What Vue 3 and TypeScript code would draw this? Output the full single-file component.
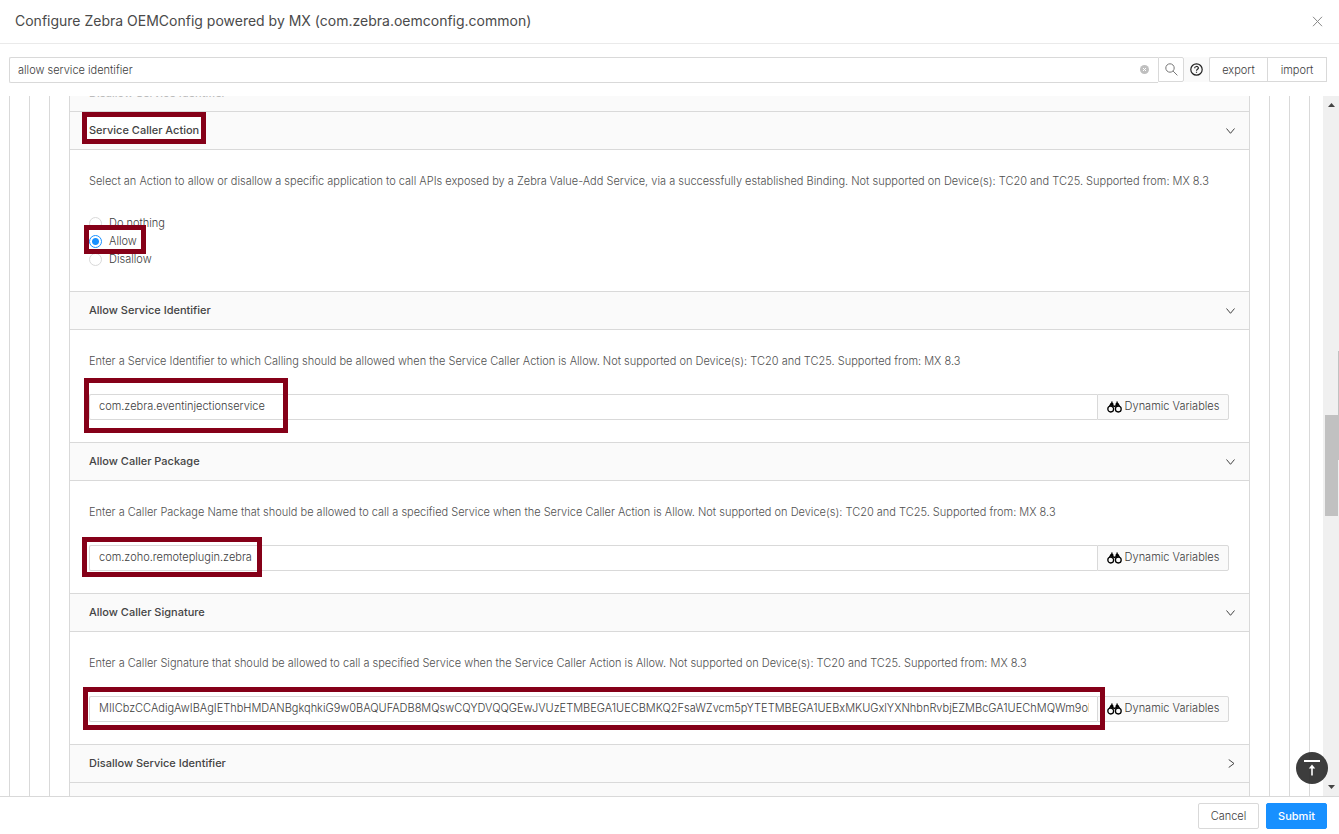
<script setup lang="ts">
import { ref } from 'vue'

interface Section {
  id: string
  title: string
  description: string
  value: string
}

const query = ref('allow service identifier')
const action = ref('Allow')
const actions = ['Do nothing', 'Allow', 'Disallow']

const sections = ref<Section[]>([
  {
    id: 'identifier',
    title: 'Allow Service Identifier',
    description:
      'Enter a Service Identifier to which Calling should be allowed when the Service Caller Action is Allow. Not supported on Device(s): TC20 and TC25. Supported from: MX 8.3',
    value: 'com.zebra.eventinjectionservice',
  },
  {
    id: 'package',
    title: 'Allow Caller Package',
    description:
      'Enter a Caller Package Name that should be allowed to call a specified Service when the Service Caller Action is Allow. Not supported on Device(s): TC20 and TC25. Supported from: MX 8.3',
    value: 'com.zoho.remoteplugin.zebra',
  },
  {
    id: 'signature',
    title: 'Allow Caller Signature',
    description:
      'Enter a Caller Signature that should be allowed to call a specified Service when the Service Caller Action is Allow. Not supported on Device(s): TC20 and TC25. Supported from: MX 8.3',
    value:
      'MIICbzCCAdigAwIBAgIEThbHMDANBgkqhkiG9w0BAQUFADB8MQswCQYDVQQGEwJVUzETMBEGA1UECBMKQ2FsaWZvcm5pYTETMBEGA1UEBxMKUGxlYXNhbnRvbjEZMBcGA1UEChMQWm9obyBDb3Jwb3JhdGlvbjE',
  },
])
</script>

<template>
  <div class="dialog">
    <header class="title-bar">
      <h1>Configure Zebra OEMConfig powered by MX (com.zebra.oemconfig.common)</h1>
      <button class="icon-btn close" aria-label="Close">
        <svg width="11" height="11" viewBox="0 0 11 11"><path d="M1 .8l9 9.4M10 .8l-9 9.4" /></svg>
      </button>
    </header>

    <div class="toolbar">
      <div class="search">
        <input v-model="query" type="text" aria-label="Search" />
        <button class="icon-btn clear" aria-label="Clear search">
          <svg width="9" height="9" viewBox="0 0 9 9">
            <circle cx="4.5" cy="4.5" r="4.5" fill="#bfbfbf" />
            <path d="M3 3l3 3M6 3L3 6" stroke="#fff" />
          </svg>
        </button>
      </div>
      <button class="tool search-btn" aria-label="Search">
        <svg width="13" height="13" viewBox="0 0 13 13">
          <circle cx="5" cy="5" r="4.2" />
          <path d="M8.1 8.1L12.4 12.4" />
        </svg>
      </button>
      <button class="tool help" aria-label="Help">
        <svg width="13" height="13" viewBox="0 0 13 13">
          <circle cx="6.5" cy="6.5" r="5.7" />
          <path d="M4.6 5.3c0-2.4 3.8-2.4 3.8-.2 0 1.3-1.9 1.2-1.9 2.7M6.5 8.7v1.1" />
        </svg>
      </button>
      <button class="tool export">export</button>
      <button class="tool import">import</button>
    </div>

    <div class="viewport">
      <div class="nest outer">
        <div class="nest">
          <div class="nest">
            <div class="panel">
              <button class="head faded">
                <span>Disallow Service Identifier</span>
                <svg class="chevron" width="9" height="6" viewBox="0 0 9 6"><path d="M.5 .5l4 4.8 4-4.8" /></svg>
              </button>

              <section>
                <button class="head">
                  <span class="mark mark-title"></span>
                  <span class="over">Service Caller Action</span>
                  <svg class="chevron" width="9" height="6" viewBox="0 0 9 6"><path d="M.5 .5l4 4.8 4-4.8" /></svg>
                </button>
                <div class="body">
                  <p>
                    Select an Action to allow or disallow a specific application to call APIs exposed by a Zebra
                    Value-Add Service, via a successfully established Binding. Not supported on Device(s): TC20 and
                    TC25. Supported from: MX 8.3
                  </p>
                  <div class="radios" role="radiogroup" aria-label="Service Caller Action">
                    <label v-for="a in actions" :key="a">
                      <input v-model="action" type="radio" name="action" :value="a" />
                      {{ a }}
                      <span v-if="a === 'Allow'" class="mark mark-allow"></span>
                    </label>
                  </div>
                </div>
              </section>

              <section v-for="s in sections" :key="s.id">
                <button class="head">
                  <span>{{ s.title }}</span>
                  <svg class="chevron" width="9" height="6" viewBox="0 0 9 6"><path d="M.5 .5l4 4.8 4-4.8" /></svg>
                </button>
                <div class="body">
                  <p>{{ s.description }}</p>
                  <div class="field">
                    <div class="entry">
                      <input v-model="s.value" type="text" :aria-label="s.title" />
                      <span class="mark" :class="'mark-' + s.id"></span>
                    </div>
                    <button class="dynamic">
                      <svg width="15" height="12" viewBox="0 0 15 12">
                        <path d="M1.8 5.2L3.6 2h2.6l.5 2.6h1.6L8.8 2h2.6l1.8 3.2-2.4-.4-3.3 1.4-3.3-1.4z" fill="#000" stroke="none" />
                        <path d="M4.2 .6h1.4V3H4.2zM9.4 .6h1.4V3H9.4z" fill="#000" stroke="none" />
                        <circle cx="3.7" cy="8.1" r="2.9" />
                        <circle cx="11.3" cy="8.1" r="2.9" />
                      </svg>
                      <span>Dynamic Variables</span>
                    </button>
                  </div>
                </div>
              </section>

              <button class="head">
                <span>Disallow Service Identifier</span>
                <svg class="chevron" width="7" height="9" viewBox="0 0 7 9"><path d="M.7 .5l5.3 4-5.3 4" /></svg>
              </button>
              <button class="head" aria-label="Disallow Caller Package"></button>
            </div>
          </div>
        </div>
      </div>

      <div class="scrollbar" aria-hidden="true">
        <svg width="7" height="4" viewBox="0 0 7 4"><path d="M0 4l3.5-4L7 4z" /></svg>
        <div class="track">
          <div class="thumb"></div>
          <div class="page-thumb"></div>
        </div>
        <svg width="7" height="4" viewBox="0 0 7 4"><path d="M0 0l3.5 4L7 0z" /></svg>
      </div>

      <button class="to-top" aria-label="Back to top">
        <svg width="16" height="16" viewBox="0 0 16 16">
          <path d="M0 1h16" stroke-width="2" />
          <path d="M8 15.5V6" stroke-width="1.6" />
          <path d="M4.8 8.6L8 4.6l3.2 4z" fill="#fff" stroke="none" />
        </svg>
      </button>
    </div>

    <footer>
      <button class="cancel">Cancel</button>
      <button class="submit">Submit</button>
    </footer>
  </div>
</template>

<style>
body {
  margin: 0;
  overflow: hidden;
}
</style>

<style scoped>
.dialog,
.dialog * {
  box-sizing: border-box;
}
.dialog {
  display: flex;
  flex-direction: column;
  height: 100vh;
  background: #fff;
  color: #3c3c3c;
  font: 300 11px/18px Inter, 'Liberation Sans', sans-serif;
}
button,
input {
  margin: 0;
  font: inherit;
  color: inherit;
}
button {
  display: flex;
  align-items: center;
  justify-content: center;
  padding: 0;
  border: 1px solid #d9d9d9;
  background: #fff;
}
svg {
  display: block;
  flex: none;
  fill: none;
  stroke: #444;
}
.icon-btn {
  border: 0;
  background: none;
}

.title-bar {
  display: flex;
  align-items: center;
  justify-content: space-between;
  flex: none;
  height: 44px;
  padding: 0 16px 1px 15px;
  border-bottom: 1px solid #eaeaea;
}
h1 {
  margin: 0;
  font-size: 14px;
  font-weight: 400;
  color: #4a4a4a;
}
.close svg {
  stroke: #888;
}

.toolbar {
  display: flex;
  flex: none;
  height: 52px;
  padding: 13px 12px 0 9px;
}
.search {
  display: flex;
  flex: 1;
  height: 26px;
  padding-bottom: 1px;
  border: 1px solid #d9d9d9;
  border-right: 0;
  border-radius: 2px 0 0 2px;
}
.search input {
  flex: 1;
  min-width: 0;
  padding: 0 8px;
  border: 0;
  background: none;
  outline: 0;
}
.clear {
  width: 28px;
}
.clear svg {
  stroke: none;
}
.tool {
  height: 25px;
}
.search-btn {
  width: 26px;
  border-radius: 0 2px 2px 0;
}
.search-btn svg {
  stroke: #777;
}
.help {
  width: 25px;
  border: 0;
  background: #fafafa;
}
.help svg {
  stroke: #222;
  stroke-width: 1.2;
}
.export {
  width: 58px;
  border-right: 0;
  border-radius: 2px 0 0 2px;
}
.import {
  width: 60px;
}

.viewport {
  position: relative;
  display: flex;
  flex: 1;
  min-height: 0;
  overflow: hidden;
}
.nest {
  height: max-content;
  padding: 0 19px;
  border: solid #d9d9d9;
  border-width: 0 1px;
}
.outer {
  flex: 1;
  min-width: 0;
  margin: -22px 13px 0 9px;
}
.panel {
  border: solid #d9d9d9;
  border-width: 0 1px;
}
.head {
  position: relative;
  justify-content: space-between;
  width: 100%;
  height: 38px;
  padding: 0 14px 0 19px;
  border: 0;
  border-bottom: 1px solid #d9d9d9;
  background: #fafafa;
  color: #444;
  font-weight: 500;
  text-align: left;
}
.head span:not(.mark) {
  padding-bottom: 2px;
}
.head.faded {
  color: #bbb;
}
.head.faded span {
  padding-bottom: 0;
}
.over {
  position: relative;
}
.body {
  padding: 22px 20px 22px 19px;
  border-bottom: 1px solid #d9d9d9;
}
.body p {
  margin: 0 0 24px;
  color: #505050;
  white-space: nowrap;
}
.radios {
  min-height: 55px;
}
.radios label {
  position: relative;
  display: flex;
  align-items: center;
  gap: 7px;
}
.radios input {
  appearance: none;
  width: 13px;
  height: 13px;
  border: 1px solid #d9d9d9;
  border-radius: 50%;
  background: #fff;
}
.radios input:checked {
  border-color: #1890ff;
  background: radial-gradient(circle, #1890ff 3px, #fff 4px);
}
.field {
  display: flex;
  height: 26px;
}
.entry {
  position: relative;
  flex: 1;
  min-width: 0;
}
.entry input {
  width: 100%;
  height: 26px;
  padding: 0 8px 2px 9px;
  border: 1px solid #d9d9d9;
  border-right: 0;
  border-radius: 2px 0 0 2px;
  background: #fff;
  outline: 0;
}
.dynamic {
  gap: 3px;
  width: 132px;
  border-radius: 0 2px 2px 0;
  background: #fafafa;
}
.dynamic span {
  padding-bottom: 2px;
}
.dynamic svg {
  stroke: #000;
  stroke-width: 1.3;
}

.mark {
  position: absolute;
  border: 5px solid #850018;
  pointer-events: none;
}
.mark-title {
  top: 0;
  left: 12px;
  width: 124px;
  height: 32px;
  background: #fff;
}
.mark-allow {
  z-index: 1;
  top: -7px;
  left: -5px;
  width: 62px;
  height: 29px;
}
.mark-identifier {
  top: -16px;
  left: -5px;
  width: 204px;
  height: 55px;
}
.mark-package {
  top: -8px;
  left: -7px;
  width: 180px;
  height: 40px;
}
.mark-signature {
  z-index: 1;
  top: -9px;
  right: -8px;
  left: -6px;
  height: 43px;
}

.scrollbar {
  display: flex;
  flex: none;
  flex-direction: column;
  align-items: center;
  width: 16px;
  padding: 7px 0;
  background: #f0f0f0;
}
.scrollbar svg {
  fill: #444;
  stroke: none;
}
.track {
  position: relative;
  flex: 1;
  width: 100%;
}
.thumb,
.page-thumb {
  position: absolute;
  background: #c1c1c1;
}
.thumb {
  top: 45.4%;
  right: 1px;
  left: 2px;
  height: 15%;
}
.page-thumb {
  top: 36%;
  right: 0;
  width: 1px;
  height: 16%;
}
.to-top {
  position: absolute;
  right: 11px;
  bottom: 12px;
  width: 32px;
  height: 32px;
  border: 0;
  border-radius: 50%;
  background: rgba(40, 40, 40, 0.9);
}
.to-top svg {
  stroke: #fff;
}

footer {
  display: flex;
  flex: none;
  justify-content: flex-end;
  gap: 7px;
  height: 38px;
  padding: 6px 12px;
  border-top: 1px solid #d9d9d9;
}
footer button {
  width: 61px;
  height: 26px;
  border-radius: 2px;
}
.submit {
  border-color: #1890ff;
  background: #1890ff;
  color: #fff;
  font-weight: 500;
}
</style>
